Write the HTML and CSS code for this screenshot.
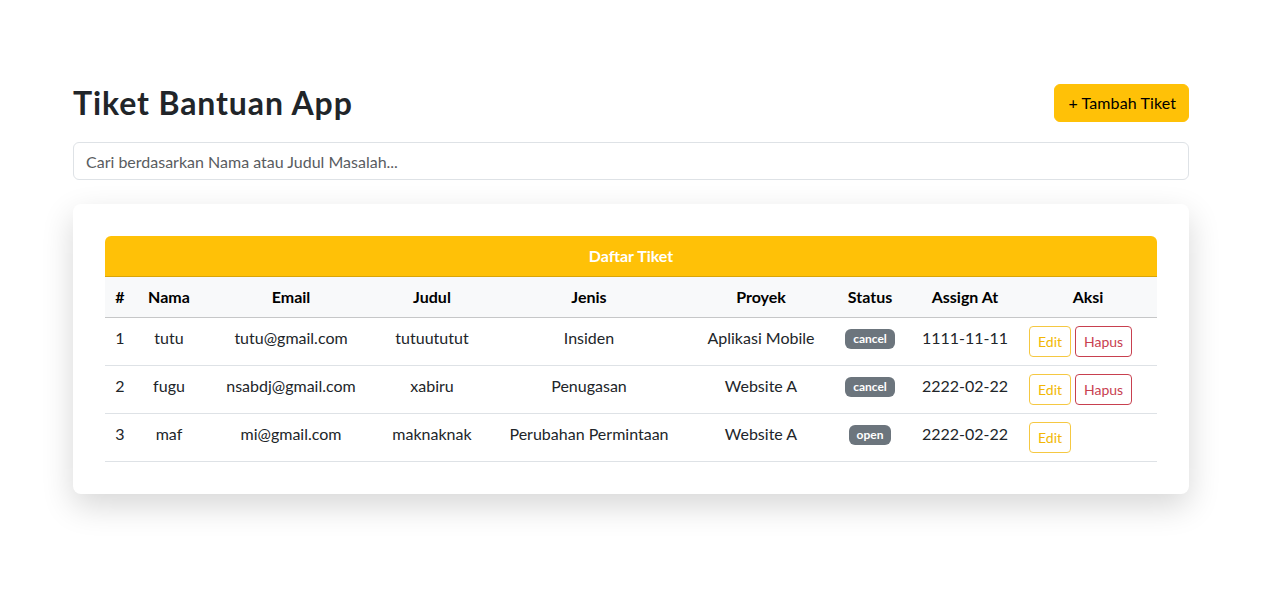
FILE: index.html
```html
<!DOCTYPE html>
<html lang="id">
<head>
<meta charset="utf-8">
<title>Tiket Bantuan App</title>
<link rel="stylesheet" href="styles.css">
</head>
<body>
<div class="page">
  <header class="top">
    <h1 class="title">Tiket Bantuan App</h1>
    <button class="btn-add" type="button">+ Tambah Tiket</button>
  </header>
  <input class="search" type="text" placeholder="Cari berdasarkan Nama atau Judul Masalah...">
  <section class="card">
    <table class="tickets">
      <colgroup>
        <col class="c-no"><col class="c-nama"><col class="c-email"><col class="c-judul"><col class="c-jenis"><col class="c-proyek"><col class="c-status"><col class="c-assign"><col class="c-aksi">
      </colgroup>
      <thead>
        <tr class="caption-row"><th colspan="9">Daftar Tiket</th></tr>
        <tr class="head-row">
          <th>#</th><th>Nama</th><th>Email</th><th>Judul</th><th>Jenis</th><th>Proyek</th><th>Status</th><th>Assign At</th><th>Aksi</th>
        </tr>
      </thead>
      <tbody>
        <tr>
          <td>1</td><td>tutu</td><td>tutu@gmail.com</td><td>tutuututut</td><td>Insiden</td><td>Aplikasi Mobile</td>
          <td><span class="badge">cancel</span></td><td>1111-11-11</td>
          <td class="aksi"><div class="actions"><button class="btn-sm edit" type="button">Edit</button><button class="btn-sm hapus" type="button">Hapus</button></div></td>
        </tr>
        <tr>
          <td>2</td><td>fugu</td><td>nsabdj@gmail.com</td><td>xabiru</td><td>Penugasan</td><td>Website A</td>
          <td><span class="badge">cancel</span></td><td>2222-02-22</td>
          <td class="aksi"><div class="actions"><button class="btn-sm edit" type="button">Edit</button><button class="btn-sm hapus" type="button">Hapus</button></div></td>
        </tr>
        <tr>
          <td>3</td><td>maf</td><td>mi@gmail.com</td><td>maknaknak</td><td>Perubahan Permintaan</td><td>Website A</td>
          <td><span class="badge">open</span></td><td>2222-02-22</td>
          <td class="aksi"><div class="actions"><button class="btn-sm edit" type="button">Edit</button></div></td>
        </tr>
      </tbody>
    </table>
  </section>
</div>
</body>
</html>
```

FILE: styles.css
```css
* { box-sizing: border-box; }

html, body {
  margin: 0;
  background: #fff;
}

body {
  font-family: Lato, "Noto Sans", sans-serif;
  font-size: 16px;
  line-height: 24px;
  color: #212529;
}

.page {
  width: 1116px;
  margin-left: 73px;
  padding-top: 84px;
  padding-bottom: 100px;
}

.top {
  display: flex;
  align-items: center;
  justify-content: space-between;
  height: 38px;
}

.title {
  margin: 0;
  font-size: 32px;
  line-height: 38px;
  font-weight: 700;
  letter-spacing: 0.9px;
  color: #212529;
}

.btn-add {
  height: 38px;
  padding: 6px 12px 6px 13px;
  font-family: inherit;
  font-size: 16px;
  line-height: 24px;
  letter-spacing: 0.1px;
  color: #000;
  background: #ffc107;
  border: 1px solid #ffc107;
  border-radius: 6px;
}

.search {
  display: block;
  width: 100%;
  height: 38px;
  margin-top: 20px;
  padding: 6px 12px;
  font-family: inherit;
  font-size: 16px;
  color: #212529;
  border: 1px solid #dee2e6;
  border-radius: 6px;
  outline: none;
}

.search::placeholder { color: #595c5f; }

.card {
  margin-top: 24px;
  padding: 32px;
  background: #fff;
  border-radius: 8px;
  box-shadow: 0 12px 32px rgba(0, 0, 0, 0.16);
}

.tickets {
  width: 100%;
  border-collapse: separate;
  border-spacing: 0;
  table-layout: fixed;
  text-align: center;
}

.c-no { width: 30px; }
.c-nama { width: 68px; }
.c-email { width: 176px; }
.c-judul { width: 106px; }
.c-jenis { width: 208px; }
.c-proyek { width: 136px; }
.c-status { width: 82px; }
.c-assign { width: 108px; }
.c-aksi { width: 138px; }

.tickets th,
.tickets td {
  padding: 8px;
  white-space: nowrap;
}

.caption-row th {
  height: 41px;
  background: #ffc107;
  color: #fff;
  font-weight: 700;
  border-bottom: 1px solid #d9a508;
  border-radius: 6px 6px 0 0;
}

.head-row th {
  height: 41px;
  background: #f8f9fa;
  color: #000;
  font-weight: 700;
  border-bottom: 1px solid #c6c7c8;
}

.tickets tbody td {
  height: 48px;
  vertical-align: top;
  border-bottom: 1px solid #dee2e6;
}

.badge {
  display: inline-block;
  padding: 4px 8px;
  font-size: 12px;
  line-height: 12px;
  font-weight: 700;
  color: #fff;
  background: #6c757d;
  border-radius: 6px;
  vertical-align: 1px;
}

.tickets td.aksi {
  padding-left: 10px;
  text-align: left;
}

.actions {
  display: flex;
  gap: 4px;
}

.btn-sm {
  height: 31px;
  padding: 4px 8px;
  font-family: inherit;
  font-size: 14px;
  line-height: 21px;
  background: #fff;
  border-radius: 4px;
}

.edit {
  color: #f2b705;
  border: 1px solid #f5c842;
}

.hapus {
  color: #c8404f;
  border: 1px solid #c8404f;
}
```
